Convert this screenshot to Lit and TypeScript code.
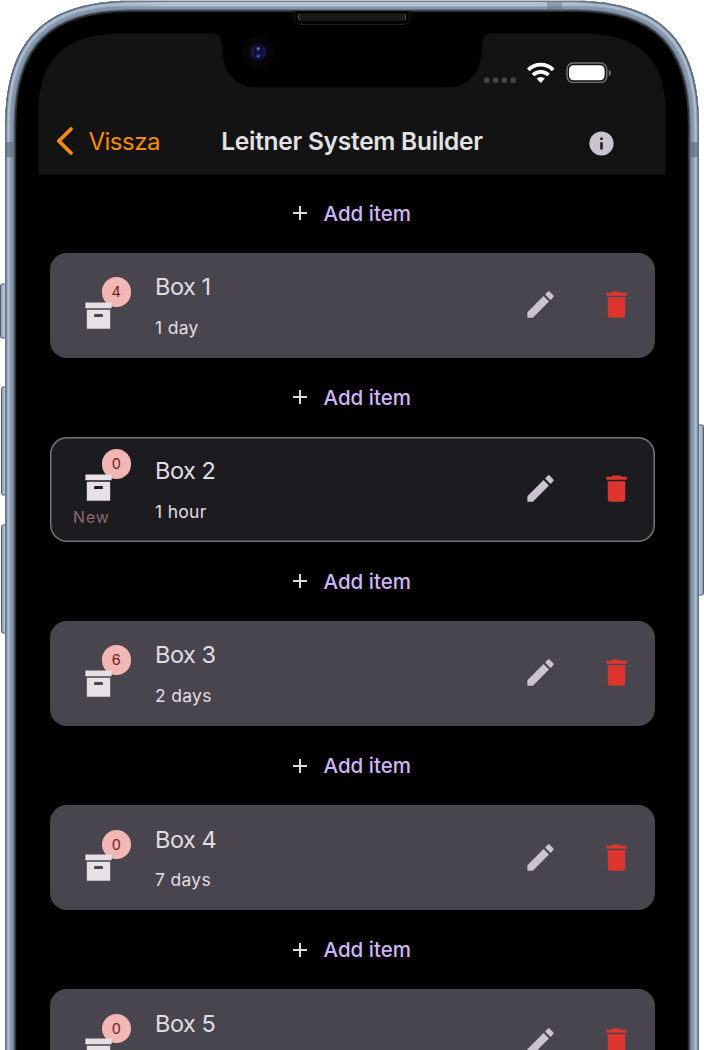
import { LitElement, html, css, svg, nothing } from "lit";
import { customElement, property } from "lit/decorators.js";

const OUTLINE =
  "M5.3 1100V125C5.3 40 45 1 130 1H575C660 1 698.8 40 698.8 125V1100Z";
const DISPLAY =
  "M38.5 174.5V110C39 58 66 33.5 122 33.5H212Q221.500 33.500 222 44C222 72 234 87.500 260 87.500H445C471 87.500 482 72 482 44Q482.500 33.500 492 33.500H582C638 33.500 665.200 58 665.500 110V174.500Z";

const ICONS = {
  archive: "M3 3h18v4H3V3zM4 8h16v13H4V8zM9.500 11a.5.5 0 0 0-.5.5V13h6v-1.500a.5.5 0 0 0-.5-.5h-5z",
  pencil:
    "M20.710 7.040c.390-.390.390-1.040 0-1.410l-2.340-2.340c-.370-.390-1.020-.390-1.410 0l-1.840 1.830 3.750 3.750M3 17.250V21h3.750L17.810 9.930l-3.750-3.750L3 17.250Z",
  trash: "M19 4h-3.500l-1-1h-5l-1 1H5v2h14M6 19a2 2 0 0 0 2 2h8a2 2 0 0 0 2-2V7H6v12Z",
  plus: "M19 13h-6v6h-2v-6H5v-2h6V5h2v6h6v2Z",
  info: "M13 9h-2V7h2m0 10h-2v-6h2m-1-9A10 10 0 1 0 12 22 10 10 0 0 0 12 2Z",
};

const icon = (name: keyof typeof ICONS, size: number, cls = "") => html`
  <svg class="icon ${cls}" width=${size} height=${size} viewBox="0 0 24 24" fill="currentColor">
    <path fill-rule="evenodd" d=${ICONS[name]} />
  </svg>`;

@customElement("phone-frame")
class PhoneFrame extends LitElement {
  static styles = css`
    :host { display: block; }
    svg { display: block; }
  `;

  render() {
    const rings: [number, string][] = [
      [22, "#303238"],
      [18.500, "#5e6b7b"],
      [16.500, "#8294a9"],
      [11, "#94a5b8"],
      [8, "#afc0d2"],
      [4.500, "#8e9fb2"],
      [2.200, "#566170"],
    ];
    const buttons = [
      [0, 284, 54], [1, 387, 108], [1, 525, 108],
    ];
    return html`<svg width="704" height="1050" viewBox="0 0 704 1050">
      <defs>
        <clipPath id="body"><path d=${OUTLINE} /></clipPath>
        <linearGradient id="key" x1="0" x2="1" y1="0" y2="0">
          <stop offset="0" stop-color="#8799ac" />
          <stop offset=".45" stop-color="#b9c9da" />
          <stop offset="1" stop-color="#8c9eb2" />
        </linearGradient>
        <linearGradient id="rim" x1="0" x2="1" y1="0" y2="0">
          <stop offset="0" stop-color="#b4c3d4" stop-opacity="0" />
          <stop offset=".12" stop-color="#b4c3d4" />
          <stop offset=".88" stop-color="#b4c3d4" />
          <stop offset="1" stop-color="#b4c3d4" stop-opacity="0" />
        </linearGradient>
        <pattern id="mesh" width="2" height="2" patternUnits="userSpaceOnUse">
          <rect width="2" height="2" fill="#161616" /><rect width="1" height="1" fill="#202020" />
        </pattern>
      </defs>
      ${buttons.map(([x, y, h]) => svg`
        <rect x=${x + 0.5} y=${y} width="8" height=${h} rx="1.500" fill="url(#key)" stroke="#515c6a" />`)}
      <rect x="696" y="425" width="7.500" height="170" rx="1.500" fill="url(#key)" stroke="#515c6a" />
      <path d=${OUTLINE} fill="#000" />
      <g clip-path="url(#body)">
        ${rings.map(([w, c]) => svg`<path d=${OUTLINE} fill="none" stroke=${c} stroke-width=${w} />`)}
        <rect x="110" y="2" width="485" height="4.500" fill="url(#rim)" />
        <rect x="5" y="142" width="9.500" height="15" fill="#5c6878" opacity=".6" />
        <rect x="689.500" y="142" width="9.500" height="15" fill="#5c6878" opacity=".6" />
        <rect x="547" y="1.500" width="15" height="8" fill="#5c6878" opacity=".4" />
      </g>
      <path d="M120 .8H586" stroke="#a8adb3" />
      <path d=${DISPLAY} fill="#131313" />
      <path d="M294.500 11V18Q294.500 24.500 301 24.500H403Q409.500 24.500 409.500 18V11" fill="#030303" stroke="#1c1c1c" />
      <rect x="298" y="13.500" width="108" height="7.500" rx="3.500" fill="url(#mesh)" />
      <path d="M299.500 14Q297 17 299.500 20M404.500 14Q407 17 404.500 20" fill="none" stroke="#5a5a5a" />
      <circle cx="258.300" cy="52" r="16" fill="#060608" />
      <circle cx="258.300" cy="52" r="8.700" fill="#0e0e2a" />
      <path d="M253.500 47.500Q251 52 253.500 56.500M263 47.500Q265.500 52 263 56.500" fill="none" stroke="#18184e" stroke-width="2.500" />
      <circle cx="258.300" cy="48.800" r="2.400" fill="#332c78" />
      <circle cx="258.300" cy="48.600" r="1" fill="#9286cc" />
      <circle cx="258.300" cy="56" r="2.400" fill="#1a2f74" />
      <circle cx="258.300" cy="56.200" r=".8" fill="#4f83c6" />
    </svg>`;
  }
}

@customElement("status-bar")
class StatusBar extends LitElement {
  static styles = css`
    :host { display: flex; justify-content: flex-end; align-items: flex-start; height: 75px; padding: 26.500px 54px 0 0; box-sizing: border-box; }
    svg { display: block; }
  `;

  render() {
    return html`<svg width="128" height="23" viewBox="484 60 128 23">
      <g fill="#454545">
        ${[484, 492.800, 501.600, 510.300].map((x) => svg`<rect x=${x} y="77.500" width="5.500" height="5.500" rx="2" />`)}
      </g>
      <g fill="none" stroke="#fff" stroke-width="3.800">
        <path d="M528.300 69.800A17.700 17.700 0 0 1 553.200 69.800" />
        <path d="M533 75A11 11 0 0 1 548.500 75" />
      </g>
      <path d="M536.600 78.600A6.200 6.200 0 0 1 544.900 78.600L540.750 83Z" fill="#fff" />
      <rect x="567" y="63" width="39.800" height="19.500" rx="6.200" fill="none" stroke="#737373" stroke-width="1.500" />
      <rect x="569" y="65.200" width="35.600" height="15.100" rx="4.500" fill="#fff" />
      <path d="M608.800 70Q611 70.500 611 73T608.800 76Z" fill="#737373" />
    </svg>`;
  }
}

@customElement("nav-header")
class NavHeader extends LitElement {
  static styles = css`
    :host { display: grid; grid-template-columns: 1fr auto 1fr; align-items: center; height: 66px; padding: 0 50px 1px 17px; box-sizing: border-box; }
    .back { display: flex; align-items: center; gap: 15px; color: #f78b0b; font-size: 24px; letter-spacing: -.5px; }
    .back svg, .icon { display: block; }
    .title { font-size: 24.500px; font-weight: 600; color: #e2e2e4; letter-spacing: -.25px; margin-left: 33px; }
    .info { justify-self: end; color: #cac4d0; padding-top: 5px; }
  `;

  render() {
    return html`
      <div class="back">
        <svg width="18" height="30" viewBox="0 0 18 30"><path d="M15 3 2.800 15 15 27" fill="none" stroke="currentColor" stroke-width="3.800" stroke-linecap="round" stroke-linejoin="round" /></svg>
        <span>Vissza</span>
      </div>
      <div class="title">Leitner System Builder</div>
      <div class="info">${icon("info", 29)}</div>`;
  }
}

@customElement("add-item")
class AddItem extends LitElement {
  static styles = css`
    :host { display: flex; justify-content: center; align-items: center; height: 79.100px; gap: 12px; color: #cbb9f6; font-size: 20.500px; font-weight: 500; padding-right: 6px; }
    .icon { color: #dedbe1; display: block; }
  `;

  render() {
    return html`${icon("plus", 24)}<span>Add item</span>`;
  }
}

@customElement("box-card")
class BoxCard extends LitElement {
  @property() name = "";
  @property() interval = "";
  @property({ type: Number }) count = 0;
  @property({ type: Boolean }) fresh = false;

  static styles = css`
    :host { display: block; }
    .card { display: grid; grid-template-columns: 105px 1fr auto; height: 105px; border-radius: 17px; background: #49454e; box-sizing: border-box; color: #e0dee2; }
    .fresh { background: #1c1b20; box-shadow: inset 0 0 0 1.500px #77747b; }
    .stack { display: grid; align-content: start; padding: 45px 0 0 31px; }
    .fresh .stack { padding-top: 33px; }
    .holder { position: relative; width: 32px; height: 32px; }
    .badge { position: absolute; left: 20.500px; top: -20.500px; width: 29.500px; height: 29.500px; border-radius: 50%; background: #f2b6b4; color: #6e1e20; font-size: 14.500px; line-height: 30px; text-align: center; }
    .holder .icon { position: relative; color: #e6e1e6; }
    .new { margin: 7px 0 0 -8px; color: #8c6970; font-size: 15.800px; line-height: 18px; letter-spacing: 1px; }
    .text { padding-top: 19.500px; }
    .name { font-size: 23.500px; line-height: 30px; letter-spacing: -.5px; }
    .interval { font-size: 17.500px; line-height: 24px; margin-top: 13.500px; letter-spacing: .3px; }
    .actions { display: flex; align-items: center; gap: 41px; padding: 0 21px 1px 0; }
    .icon { display: block; }
    .edit { color: #cac4d0; }
    .remove { color: #dd362e; }
  `;

  render() {
    return html`<div class="card ${this.fresh ? "fresh" : ""}">
      <div class="stack">
        <div class="holder"><span class="badge">${this.count}</span>${icon("archive", 35)}</div>
        ${this.fresh ? html`<span class="new">New</span>` : nothing}
      </div>
      <div class="text">
        <div class="name">${this.name}</div>
        ${this.interval ? html`<div class="interval">${this.interval}</div>` : nothing}
      </div>
      <div class="actions">${icon("pencil", 35, "edit")}${icon("trash", 35, "remove")}</div>
    </div>`;
  }
}

@customElement("app-root")
class AppRoot extends LitElement {
  static styles = css`
    :host { display: grid; width: 704px; height: 1050px; overflow: hidden; background: #fff; font-family: Inter, "Liberation Sans", sans-serif; }
    phone-frame, .screen { grid-area: 1 / 1; }
    .screen { z-index: 1; min-height: 0; display: flex; flex-direction: column; margin: 33.500px 38.500px 0; }
    .screen > * { flex: none; }
    .list { padding: 0 11px 0 11.500px; margin-top: -.8px; }
  `;

  private boxes = [
    { name: "Box 1", interval: "1 day", count: 4 },
    { name: "Box 2", interval: "1 hour", count: 0, fresh: true },
    { name: "Box 3", interval: "2 days", count: 6 },
    { name: "Box 4", interval: "7 days", count: 0 },
    { name: "Box 5", interval: "", count: 0 },
  ];

  render() {
    return html`
      <phone-frame></phone-frame>
      <div class="screen">
        <status-bar></status-bar>
        <nav-header></nav-header>
        <div class="list">
          ${this.boxes.map((b) => html`
            <add-item></add-item>
            <box-card .name=${b.name} .interval=${b.interval} .count=${b.count} .fresh=${!!b.fresh}></box-card>`)}
        </div>
      </div>`;
  }
}
